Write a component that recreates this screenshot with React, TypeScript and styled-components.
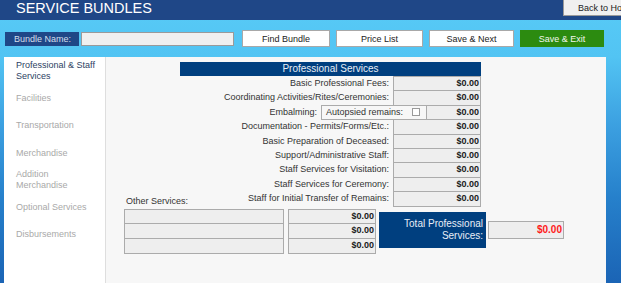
import styled, { createGlobalStyle } from "styled-components";

const GlobalStyle = createGlobalStyle`
  html, body {
    margin: 0;
    height: 100%;
    overflow: hidden;
  }
  body {
    font-family: "Liberation Sans", Arial, sans-serif;
  }
`;

const navItems = [
  "Professional & Staff Services",
  "Facilities",
  "Transportation",
  "Merchandise",
  "Addition Merchandise",
  "Optional Services",
  "Disbursements",
];

const services = [
  "Basic Professional Fees:",
  "Coordinating Activities/Rites/Ceremonies:",
  "Embalming:",
  "Documentation - Permits/Forms/Etc.:",
  "Basic Preparation of Deceased:",
  "Support/Administrative Staff:",
  "Staff Services for Visitation:",
  "Staff Services for Ceremony:",
  "Staff for Initial Transfer of Remains:",
];

export default function App() {
  return (
    <>
      <GlobalStyle />
      <Page>
        <Header>
          <Title>SERVICE BUNDLES</Title>
          <BackButton>Back to Home</BackButton>
        </Header>

        <Toolbar>
          <FieldLabel>Bundle Name:</FieldLabel>
          <NameInput />
          <ToolButton $width={88}>Find Bundle</ToolButton>
          <ToolButton $width={87}>Price List</ToolButton>
          <ToolButton $width={85}>Save &amp; Next</ToolButton>
          <ToolButton $width={84} $primary>
            Save &amp; Exit
          </ToolButton>
        </Toolbar>

        <Panel>
          <Nav>
            {navItems.map((item, i) => (
              <NavItem key={item} $active={i === 0}>
                {item}
              </NavItem>
            ))}
          </Nav>

          <Content>
            <ServiceTable>
              <TableHead>Professional Services</TableHead>
              {services.map((label) =>
                label === "Embalming:" ? (
                  <EmbalmRow key={label}>
                    <RowLabel>{label}</RowLabel>
                    <AutopsyBox>
                      Autopsied remains:
                      <CheckBox />
                    </AutopsyBox>
                    <Amount>$0.00</Amount>
                  </EmbalmRow>
                ) : (
                  <Row key={label}>
                    <RowLabel>{label}</RowLabel>
                    <Amount>$0.00</Amount>
                  </Row>
                )
              )}
            </ServiceTable>

            <Bottom>
              <Other>
                <OtherLabel>Other Services:</OtherLabel>
                {[0, 1, 2].map((i) => (
                  <OtherRow key={i}>
                    <TextCell />
                    <Amount>$0.00</Amount>
                  </OtherRow>
                ))}
              </Other>

              <Total>
                <TotalLabel>
                  Total Professional
                  <br />
                  Services:
                </TotalLabel>
                <TotalValue>$0.00</TotalValue>
              </Total>
            </Bottom>
          </Content>
        </Panel>
      </Page>
    </>
  );
}

const Page = styled.div`
  height: 100vh;
  display: flex;
  flex-direction: column;
  background: linear-gradient(
    to bottom,
    #58cbf7 0%,
    #52c4f3 20%,
    #3b9fe0 45%,
    #2680cb 70%,
    #1b64b5 100%
  );
`;

const Header = styled.header`
  height: 20px;
  flex-shrink: 0;
  display: flex;
  align-items: flex-start;
  background: #1f4787;
  overflow: hidden;
`;

const Title = styled.h1`
  margin: 0 0 0 16px;
  font-size: 14.5px;
  line-height: 16px;
  font-weight: normal;
  color: #ffffff;
`;

const BackButton = styled.button`
  margin-left: auto;
  margin-right: -32px;
  flex-shrink: 0;
  width: 90px;
  height: 16px;
  padding: 0 0 0 14px;
  text-align: left;
  font-family: inherit;
  font-size: 9px;
  color: #222;
  background: #f0f0f0;
  border: 1px solid #9a9a9a;
  border-top: 0;
`;

const Toolbar = styled.div`
  display: flex;
  align-items: center;
  height: 17px;
  flex-shrink: 0;
  padding: 10px 15px 10px 5px;
`;

const FieldLabel = styled.div`
  width: 74px;
  height: 14px;
  box-sizing: border-box;
  padding-left: 9px;
  font-size: 9px;
  line-height: 14px;
  color: #d6deea;
  background: #1f4787;
`;

const NameInput = styled.input`
  width: 153px;
  height: 14px;
  margin: 0 8px 0 2px;
  padding: 0;
  box-sizing: border-box;
  background: #f0f0f0;
  border: 1px solid #9a9a9a;
`;

const ToolButton = styled.button<{ $width: number; $primary?: boolean }>`
  width: ${(p) => p.$width}px;
  height: 17px;
  margin-right: 6px;
  padding: 0;
  font-family: inherit;
  font-size: 9px;
  color: ${(p) => (p.$primary ? "#f2f7ee" : "#222")};
  background: ${(p) => (p.$primary ? "#2c8b10" : "#ffffff")};
  border: 1px solid ${(p) => (p.$primary ? "#2c8b10" : "#a8a8a8")};

  &:last-child {
    margin-right: 0;
  }
`;

const Panel = styled.main`
  flex: 1;
  display: flex;
  margin: 0 15px 0 4px;
`;

const Nav = styled.nav`
  width: 101px;
  padding-top: 0.5px;
  background: #ffffff;
  border-right: 1px solid #dedede;
`;

const NavItem = styled.div<{ $active?: boolean }>`
  height: 27.3px;
  display: flex;
  align-items: center;
  padding: 0 6px 0 12px;
  font-size: 9px;
  line-height: 11px;
  color: ${(p) => (p.$active ? "#2d3f63" : "#a9a9a9")};
`;

const Content = styled.section`
  flex: 1;
  padding: 5px 0 0 18px;
  background: #f7f7f7;
`;

const ServiceTable = styled.div`
  width: 301px;
  margin-left: 56px;
`;

const TableHead = styled.div`
  height: 14px;
  font-size: 10px;
  line-height: 14px;
  text-align: center;
  color: #e8eef6;
  background: #003f7f;
`;

const Row = styled.div`
  display: grid;
  grid-template-columns: 1fr 88px;
  height: 15.4px;

  & + & {
    margin-top: -1px;
  }
`;

const EmbalmRow = styled(Row)`
  grid-template-columns: 1fr 105px 55px;
  margin-top: -1px;

  & + ${Row} {
    margin-top: -1px;
  }
`;

const RowLabel = styled.div`
  padding-right: 4px;
  font-size: 9px;
  line-height: 15px;
  text-align: right;
  color: #333;
`;

const Amount = styled.div`
  box-sizing: border-box;
  height: 100%;
  padding-right: 1px;
  font-size: 9px;
  font-weight: bold;
  line-height: 13.4px;
  text-align: right;
  color: #1a1a1a;
  background: #eeeeee;
  border: 1px solid #ababab;
`;

const AutopsyBox = styled.div`
  box-sizing: border-box;
  display: flex;
  align-items: center;
  justify-content: space-between;
  height: 100%;
  padding: 0 6px 0 4px;
  font-size: 9px;
  color: #333;
  border: 1px solid #ababab;
  border-right: 0;
`;

const CheckBox = styled.span`
  width: 6px;
  height: 6px;
  background: #ffffff;
  border: 1px solid #9a9a9a;
`;

const Bottom = styled.div`
  display: flex;
  align-items: flex-start;
  margin-top: -11px;
`;

const Other = styled.div`
  width: 252px;
`;

const OtherLabel = styled.div`
  height: 11px;
  margin-bottom: 2px;
  padding-left: 2px;
  font-size: 9px;
  line-height: 11px;
  color: #333;
`;

const OtherRow = styled.div`
  display: grid;
  grid-template-columns: 160px 88px;
  column-gap: 4px;
  height: 15.7px;

  & + & {
    margin-top: -1px;
  }
`;

const TextCell = styled.div`
  box-sizing: border-box;
  height: 100%;
  background: #eeeeee;
  border: 1px solid #ababab;
`;

const Total = styled.div`
  display: flex;
  align-items: center;
  margin: 16px 0 0 3px;
`;

const TotalLabel = styled.div`
  box-sizing: border-box;
  width: 107px;
  height: 36px;
  display: flex;
  align-items: center;
  justify-content: flex-end;
  padding-right: 3px;
  font-size: 10px;
  line-height: 12px;
  text-align: right;
  color: #e8eef6;
  background: #003f7f;
`;

const TotalValue = styled.div`
  box-sizing: border-box;
  width: 76px;
  height: 18px;
  margin-left: 2px;
  padding-right: 1px;
  font-size: 10px;
  font-weight: bold;
  line-height: 16px;
  text-align: right;
  color: #ff1a1a;
  background: #eeeeee;
  border: 1px solid #ababab;
`;
